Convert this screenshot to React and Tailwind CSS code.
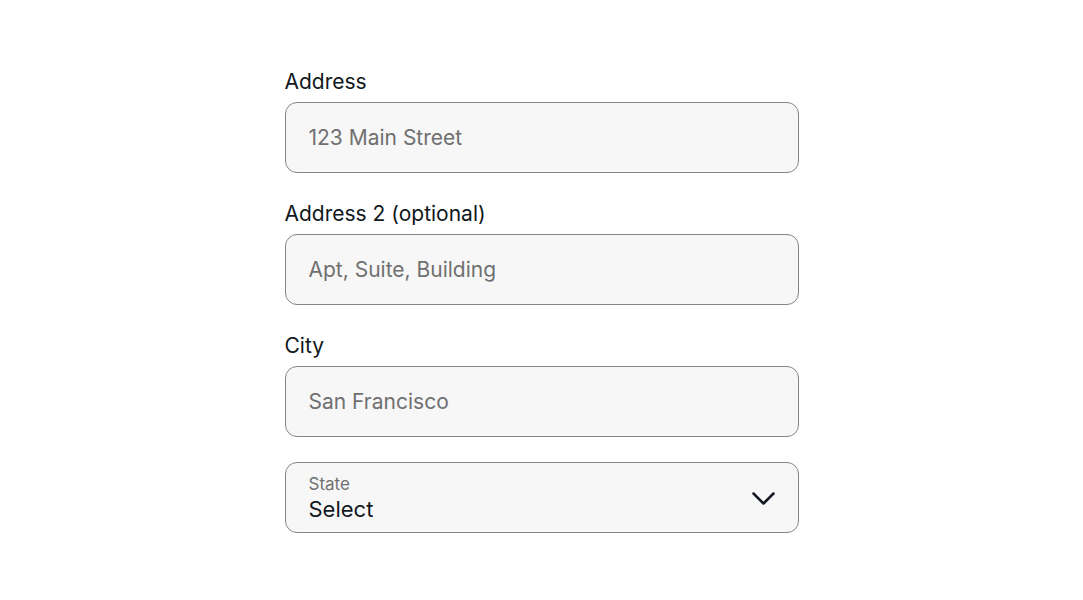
import React from 'react';

const font = { fontFamily: 'Inter, "Noto Sans", sans-serif' };

function Field({ label, placeholder }) {
  return (
    <div>
      <label className="block text-[21px] leading-[28px] text-[#111820] mb-[6px]">{label}</label>
      <input
        type="text"
        placeholder={placeholder}
        className="w-full h-[71px] px-[23px] bg-[#f7f7f7] border-[1.5px] border-[#858585] rounded-[12px] text-[21px] text-[#111820] placeholder-[#707070] outline-none"
      />
    </div>
  );
}

export default function App() {
  return (
    <div className="min-h-screen w-full bg-white flex items-center justify-center" style={font}>
      <div className="w-[514px] flex flex-col gap-[27px]">
        <Field label="Address" placeholder="123 Main Street" />
        <Field label="Address 2 (optional)" placeholder="Apt, Suite, Building" />
        <Field label="City" placeholder="San Francisco" />

        {/* State select */}
        <div className="-mt-[2px] h-[71px] bg-[#f7f7f7] border-[1.5px] border-[#858585] rounded-[12px] flex items-center pl-[23px] pr-[23px]">
          <div className="flex-1 flex flex-col pt-[3px]">
            <span className="text-[17px] leading-[21px] text-[#707070]">State</span>
            <span className="text-[22px] leading-[28px] text-[#111820]">Select</span>
          </div>
          <svg width="23" height="14" viewBox="0 0 23 14" fill="none" className="mt-[4px]">
            <path d="M1.5 1.5l10 10 10-10" stroke="#111820" strokeWidth="2.5" strokeLinecap="round" strokeLinejoin="round" />
          </svg>
        </div>
      </div>
    </div>
  );
}
